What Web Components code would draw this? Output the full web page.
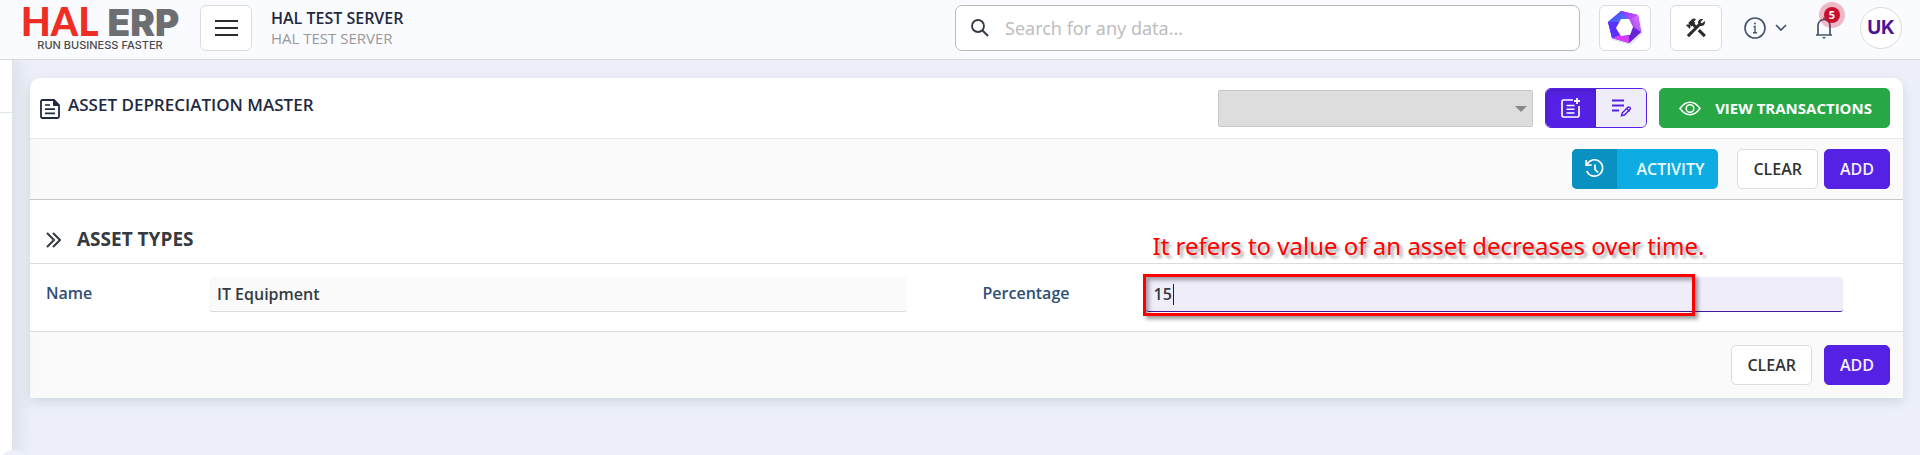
<!DOCTYPE html>
<html lang="en">
<head>
<meta charset="utf-8">
<meta name="viewport" content="width=device-width, initial-scale=1">
<title>Asset Depreciation Master</title>
<style>
html,body{margin:0;height:100%}
body{font-family:"Open Sans","Noto Sans",sans-serif;font-size:16px;color:#333}
</style>
</head>
<body>
<erp-shell>
  <erp-header slot="header" company="HAL TEST SERVER" branch="HAL TEST SERVER"></erp-header>
  <erp-card heading="ASSET DEPRECIATION MASTER">
    <erp-select slot="tools" label="Template"></erp-select>
    <mode-toggle slot="tools"></mode-toggle>
    <erp-button slot="tools" kind="success" icon="eye">VIEW TRANSACTIONS</erp-button>
    <erp-button slot="actions" kind="info" icon="history">ACTIVITY</erp-button>
    <button-pair slot="actions" dense>
      <erp-button>CLEAR</erp-button>
      <erp-button kind="primary">ADD</erp-button>
    </button-pair>
    <erp-section heading="ASSET TYPES">
      <erp-field label="Name" value="IT Equipment"></erp-field>
      <erp-field label="Percentage" value="15" active>
        <field-note slot="note">It refers to value of an asset decreases over time.</field-note>
      </erp-field>
    </erp-section>
    <button-pair slot="footer">
      <erp-button>CLEAR</erp-button>
      <erp-button kind="primary">ADD</erp-button>
    </button-pair>
  </erp-card>
</erp-shell>

<script>
const icons = {
  menu: `<path d="M1 3h23M1 10h23M1 17h23" stroke-width="2"/>`,
  search: `<circle cx="8" cy="8" r="6" stroke-width="1.8"/><path d="M12 12l6 6" stroke-width="2"/>`,
  info: `<circle cx="11" cy="11" r="10" stroke-width="1.6"/><path d="M9.5 9.5H11v6.3M9 15.800h4" stroke-width="1.4"/><circle cx="11" cy="6.6" r="1" fill="currentColor" stroke="none"/>`,
  chevron: `<path d="M1 1l5 5 5-5" stroke-width="1.7"/>`,
  bell: `<path d="M1 19h16M3 19V9.500a6 6 0 0 1 12 0V19M9 3.500V1.500" stroke-width="1.7"/><path d="M7 21h4l-2 2z" fill="currentColor" stroke="none"/>`,
  doc: `<path d="M2.500 1H14l5 5v11.500q0 1.500-1.500 1.500h-15Q1 19 1 17.500v-15Q1 1 2.500 1z" stroke-width="1.8"/><path d="M13.500 1v5.500H19z" fill="currentColor" stroke-width="1"/><path d="M5 6h5M5 10.200h10M5 14.400h10" stroke-width="1.700"/>`,
  noteAdd: `<path d="M12 2H2.500Q1 2 1 3.500v14Q1 19 2.500 19h14q1.500 0 1.500-1.500V8" stroke-width="1.700"/><path d="M5.500 7.500h8M5.500 11.200h8M5.500 14.900h8" stroke-width="1.500"/><path d="M16 0v6M13 3h6" stroke-width="1.800"/>`,
  edit: `<path d="M0 1.500h12M0 6.500h12M0 11.500h7" stroke-width="1.800"/><path d="M9.500 16.800l.8-3L16 8.200q.8-.6 1.500 0l.6.6q.6.8 0 1.500l-5.700 5.700z" stroke-width="1.500"/><path d="M14 9l3.500 3.500" stroke-width="1.200"/>`,
  eye: `<path d="M1 7.500C7-.700 15-.700 21 7.500 15 15.700 7 15.700 1 7.500z" stroke-width="1.500"/><circle cx="11" cy="7.500" r="3.800" stroke-width="1.500"/>`,
  history: `<path d="M2 5.500A8.200 8.200 0 1 1 1.800 12" stroke-width="1.700"/><path d="M1.200 1v5.200h5.500M10 5.500v4.800l3 3.200" stroke-width="1.700"/>`,
  section: `<path d="M1 1l7 7-7 7M7 1l7 7-7 7" stroke-width="2"/>`,
  tools: `<g fill="currentColor" stroke="none"><path d="M13.780 15.170l2.120-2.120 6 6-2.120 2.120z"/><path d="M17.500 10c1.930 0 3.500-1.570 3.500-3.500 0-.580-.160-1.120-.410-1.600l-2.700 2.700L16.400 6.110l2.700-2.700C18.620 3.160 18.080 3 17.500 3 15.570 3 14 4.570 14 6.500c0 .410.080.800.210 1.160l-1.850 1.850-1.780-1.780.710-.710-1.410-1.410L12 3.490c-1.170-1.170-3.070-1.170-4.240 0L4.220 7.030l1.410 1.410H2.810L2.100 9.150l3.540 3.540.710-.710V9.150l1.410 1.410.710-.710 1.780 1.780-7.410 7.410 2.120 2.120L16.340 9.790c.360.130.750.210 1.160.210z"/></g>`,
  assistant: `<defs>
    <linearGradient id="a" x1="0" y1="0" x2="1" y2="1"><stop stop-color="#4a3cff"/><stop offset="1" stop-color="#4f8dff"/></linearGradient>
    <linearGradient id="b" x1="0" y1="0" x2="1" y2="1"><stop stop-color="#8a35ff"/><stop offset="1" stop-color="#e65bff"/></linearGradient>
    <linearGradient id="c" x1="1" y1="0" x2="0" y2="1"><stop stop-color="#f07cff"/><stop offset="1" stop-color="#8a3cf0"/></linearGradient></defs>
    <g stroke="none"><path d="M15 1l17 5 4 17-12 12L5 30 1 12z" fill="#e4e4ee"/>
    <path d="M14 1l17 4 3 17-12 11L5 28 1 12z" fill="#6a2cf0"/>
    <path d="M14 1l8 9-9 2-4 7-8-7z" fill="url(#a)"/>
    <path d="M14 1l17 4-5 12-4-7z" fill="url(#b)"/>
    <path d="M31 5l3 17-9-3-3-9z" fill="url(#c)"/>
    <path d="M34 22L22 33l-9-8 9 0 4-8z" fill="#6a22d8"/>
    <path d="M22 33L5 28l5-9 4 7 8 0z" fill="#d83cff"/>
    <path d="M5 28L1 12l12 0-4 7 4 6z" fill="#5a30ff"/>
    <path d="M14 9l8 0 4 8-3 8-9 1-5-8z" fill="#fff"/></g>`
};

const icon = (name, w, h) =>
  `<svg width="${w}" height="${h}" viewBox="0 0 ${w} ${h}" fill="none" stroke="currentColor" aria-hidden="true">${icons[name]}</svg>`;

const base = `
:host,*{box-sizing:border-box}
svg{display:block;flex:none}
button,input,select{font:inherit;color:inherit;margin:0}
button{cursor:pointer}
`;

// attaches an open shadow root filled from a template
class Base extends HTMLElement {
  constructor() {
    super();
    const t = document.createElement("template");
    t.innerHTML = `<style>${base}${this.css()}</style>${this.html()}`;
    this.attachShadow({ mode: "open" }).append(t.content.cloneNode(true));
  }
  css() { return ""; }
  html() { return "<slot></slot>"; }
  attr(n) { return this.getAttribute(n) || ""; }
}

class ErpShell extends Base {
  css() {
    return `
:host{display:flex;flex-direction:column;min-height:100vh;background:#edf0f9}
.body{display:flex;flex:1;overflow:hidden}
aside{position:relative;width:13px;flex:none;background:#fff;border-right:1px solid #dfe2e6;box-shadow:4px 0 18px rgba(70,80,95,.16)}
aside hr{margin:52px 0 0;border:0;border-top:1px solid #e3e5e8}
aside button{position:absolute;left:-2px;bottom:-27px;width:32px;height:32px;border:0;border-radius:50%;background:#edf0f9}
main{flex:1;min-width:0;padding:18px 17px}
`;
  }
  html() {
    return `<slot name="header"></slot>
<div class="body"><aside><hr><button type="button" aria-label="Expand sidebar"></button></aside><main><slot></slot></main></div>`;
  }
}

class ErpLogo extends Base {
  css() {
    return `
:host{display:flex;flex-direction:column;align-items:center;width:164px}
.name{display:flex;align-items:baseline;gap:9px}
.hal{font:900 39px/32px "Lato",sans-serif;color:#ee2e24}
.erp{font:900 37px/32px "Inter",sans-serif;color:#6d6e71}
small{font:500 11px/12px "Inter",sans-serif;color:#4a4a4c}
`;
  }
  html() {
    return `<div class="name"><span class="hal">HAL</span><span class="erp">ERP</span></div><small>RUN BUSINESS FASTER</small>`;
  }
}

class ErpHeader extends Base {
  css() {
    return `
:host{display:flex;align-items:center;height:60px;padding:0 18px 4px;background:#fafbff;border-bottom:1px solid #d9dbe0}
.box{display:grid;place-items:center;width:52px;height:46px;padding:0;background:#fff;border:1px solid #dcdcdc;border-radius:6px;color:#2b2b2b}
.menu{margin-left:18px}
.company{margin-left:19px;flex:1}
.company b,.company span{display:block;line-height:20px}
.company b{font-weight:600;color:#1f2940}
.company span{font-size:15px;color:#999}
.search{display:flex;align-items:center;gap:15px;width:625px;height:46px;padding:0 14px;background:#fff;border:1px solid #b9b9b9;border-radius:7px;color:#333a44}
.search input{flex:1;min-width:0;padding:0;border:0;outline:0;background:none;font-family:"Noto Sans",sans-serif;font-size:18px}
.search input::placeholder{color:#bdbdbd;opacity:1}
.right{display:flex;align-items:center;gap:19px;margin-left:19px}
.info{display:flex;align-items:center;gap:9px;padding:0 1px 0 3px;border:0;background:none;color:#44536b}
.bell{position:relative;margin:0 8px;padding:0;border:0;background:none;color:#44536b}
.bell span{position:absolute;left:9px;top:-9px;width:16px;height:16px;border-radius:50%;background:#c8102e;box-shadow:0 0 0 5px rgba(200,16,46,.28);color:#fff;font:700 11px/16px "Noto Sans",sans-serif;text-align:center}
.user{width:42px;height:42px;padding:0;border:1px solid #dcdcdc;border-radius:50%;background:#fff;color:#4b1596;font:700 19px/40px "Inter",sans-serif}
`;
  }
  html() {
    return `
<erp-logo></erp-logo>
<button class="box menu" type="button" aria-label="Menu">${icon("menu", 25, 20)}</button>
<div class="company"><b>${this.attr("company")}</b><span>${this.attr("branch")}</span></div>
<label class="search">${icon("search", 20, 20)}<input type="text" placeholder="Search for any data..." aria-label="Search"></label>
<div class="right">
  <button class="box" type="button" aria-label="Assistant">${icon("assistant", 36, 36)}</button>
  <button class="box" type="button" aria-label="Tools">${icon("tools", 24, 24)}</button>
  <button class="info" type="button" aria-label="Information">${icon("info", 22, 22)}${icon("chevron", 12, 8)}</button>
  <button class="bell" type="button" aria-label="Notifications">${icon("bell", 18, 24)}<span>5</span></button>
  <button class="user" type="button">UK</button>
</div>`;
  }
}

class ErpCard extends Base {
  css() {
    return `
:host{display:block;background:#fff;border-radius:10px 10px 0 0;box-shadow:0 4px 12px rgba(60,80,100,.16)}
header,.actions,footer{display:flex;align-items:center;padding:0 13px}
header{height:61px;gap:8px;padding-left:10px;border-bottom:1px solid #e8e8e8;color:#1f2940}
h1{flex:1;margin:0;padding-bottom:6px;font-size:17px;line-height:24px;font-weight:600}
header svg{margin-top:1px}
.tools{display:flex;align-items:center;gap:12px}
.actions{height:61px;justify-content:flex-end;gap:19px;background:#fafafa;border-bottom:1px solid #c8c8c8}
footer{height:67px;justify-content:flex-end;background:#fafafa;border-top:1px solid #dcdcdc}
`;
  }
  html() {
    return `
<header>${icon("doc", 20, 20)}<h1>${this.attr("heading")}</h1><div class="tools"><slot name="tools"></slot></div></header>
<div class="actions"><slot name="actions"></slot></div>
<slot></slot>
<footer><slot name="footer"></slot></footer>`;
  }
}

class ErpSelect extends Base {
  css() {
    return `
:host{display:block;position:relative;width:315px}
select{display:block;width:100%;height:37px;padding:0 24px 0 8px;appearance:none;background:#ddd;border:1px solid #c8c8c8;border-radius:2px;opacity:1}
svg{position:absolute;right:6px;top:16px;pointer-events:none}
`;
  }
  html() {
    return `<select disabled aria-label="${this.attr("label")}"><option></option></select>
<svg width="12" height="6" viewBox="0 0 12 6"><path d="M0 0h12L6 6z" fill="#888"/></svg>`;
  }
}

class ModeToggle extends Base {
  css() {
    return `
:host{display:flex;height:40px;border:1px solid #5521e5;border-radius:6px;overflow:hidden}
button{display:grid;place-items:center;width:50px;padding:0;border:0;background:#f0edfb;color:#5521e5}
button[aria-pressed=true]{background:#5521e5;color:#fff;box-shadow:inset 0 3px 5px rgba(0,0,0,.13)}
`;
  }
  html() {
    return `<button type="button" aria-pressed="true" aria-label="New">${icon("noteAdd", 20, 20)}</button>
<button type="button" aria-pressed="false" aria-label="Edit">${icon("edit", 19, 18)}</button>`;
  }
}

class ErpButton extends Base {
  css() {
    return `
:host{display:block}
button{display:flex;align-items:center;height:40px;padding:0 15px;border:1px solid #dcdcdc;border-radius:5px;background:#fff;color:#333;font-weight:600;white-space:nowrap}
:host([kind=primary]) button{background:#5521e5;border-color:#5521e5;color:#f3efff}
:host([kind=success]) button{gap:14px;padding:0 17px 0 19px;background:#28a745;border-color:#28a745;color:#fff;font-size:15px;font-weight:700}
:host([kind=info]) button{padding:0 14px 0 0;gap:19px;overflow:hidden;background:#0dace3;border:0;color:#eefaff}
:host([kind=info]) i{display:grid;place-items:center;width:45px;height:40px;background:#0991c1;color:#fff}
i{display:block}
`;
  }
  html() {
    const size = { eye: [22, 15], history: [20, 20] }[this.attr("icon")];
    return `<button type="button">${size ? `<i>${icon(this.attr("icon"), ...size)}</i>` : ""}<slot></slot></button>`;
  }
}

class ButtonPair extends Base {
  css() {
    return `
:host{display:flex;gap:12px}
:host([dense]){gap:6px}
`;
  }
}

class ErpSection extends Base {
  css() {
    return `
:host{display:block}
header{display:flex;align-items:center;gap:16px;height:64px;padding:0 16px;border-bottom:1px solid #dcdcdc;color:#343a40}
header svg{margin-top:17px}
h2{margin:14px 0 0;font-size:19px;line-height:24px;font-weight:700}
.fields{display:grid;grid-template-columns:1fr 1fr;padding:13px 0 19px}
`;
  }
  html() {
    return `<header>${icon("section", 15, 16)}<h2>${this.attr("heading")}</h2></header><div class="fields"><slot></slot></div>`;
  }
}

class ErpField extends Base {
  css() {
    return `
:host{display:grid;grid-template-columns:163px 1fr;padding:0 60px 0 16px;font-weight:600}
label{line-height:32px;color:#2f4f74}
.control{position:relative}
input{display:block;width:100%;height:35px;padding:0 8px;border:0;border-bottom:1px solid #dcdcdc;border-radius:3px;outline:0;background:#fafafa;color:#343a40}
:host([active]) input{border-bottom-color:#3d1a9e;caret-color:transparent;background:linear-gradient(#222,#222) 27px 7px/1px 21px no-repeat,#f0edfb}
`;
  }
  html() {
    return `<label for="f">${this.attr("label")}</label>
<div class="control"><input id="f" type="text" value="${this.attr("value")}"><slot name="note"></slot></div>`;
  }
}

// red callout drawn over the field it explains
class FieldNote extends Base {
  css() {
    return `
:host{position:absolute;left:-3px;top:-47px;width:552px;pointer-events:none;color:#f00;font-family:"Noto Sans",sans-serif;font-weight:400}
p{margin:0;padding-left:10px;font-size:24px;line-height:32px;white-space:nowrap;text-shadow:3px 3px 3px rgba(0,0,0,.35)}
div{height:42px;margin-top:12px;border:3px solid #f00;box-shadow:3px 3px 4px rgba(0,0,0,.4),inset 3px 3px 4px rgba(0,0,0,.35)}
`;
  }
  html() { return `<p><slot></slot></p><div></div>`; }
}

const tags = {
  "erp-shell": ErpShell,
  "erp-logo": ErpLogo,
  "erp-header": ErpHeader,
  "erp-card": ErpCard,
  "erp-select": ErpSelect,
  "mode-toggle": ModeToggle,
  "erp-button": ErpButton,
  "button-pair": ButtonPair,
  "erp-section": ErpSection,
  "erp-field": ErpField,
  "field-note": FieldNote
};
Object.entries(tags).forEach(([k, v]) => window.customElements.define(k, v));
</script>
</body>
</html>
